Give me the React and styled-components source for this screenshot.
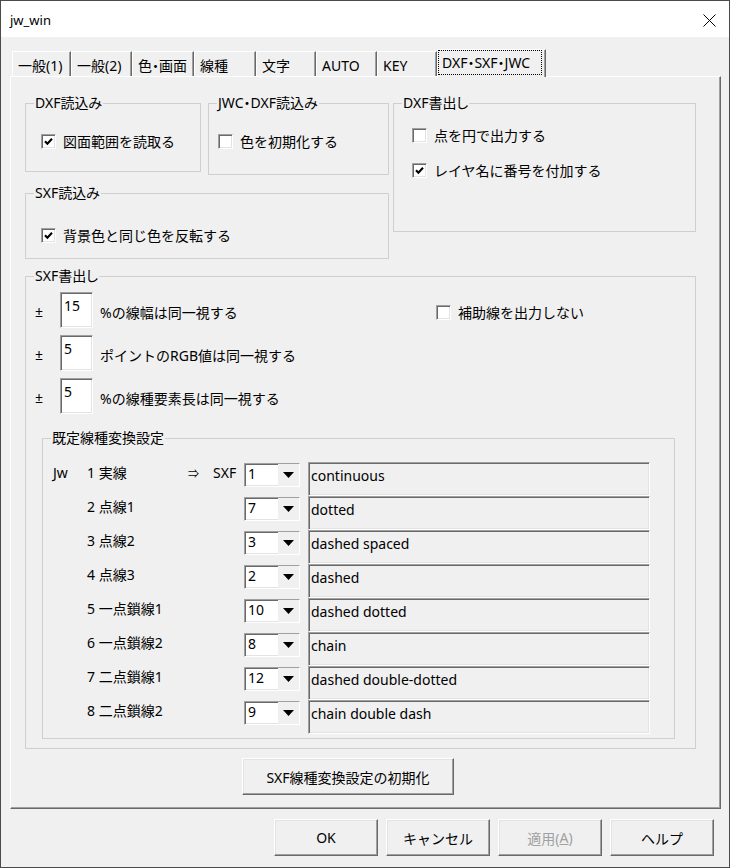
import styled, { createGlobalStyle } from "styled-components";

const GlobalStyle = createGlobalStyle`
  html, body {
    margin: 0;
    padding: 0;
    background: #f0f0f0;
  }
  body {
    font-family: "Noto Sans", "Noto Sans CJK JP", sans-serif;
    font-size: 14px;
    color: #000;
  }
  * {
    box-sizing: border-box;
  }
`;

const tabs = [
  { label: "一般(1)", w: 59 },
  { label: "一般(2)", w: 61 },
  { label: "色・画面", w: 62 },
  { label: "線種", w: 62 },
  { label: "文字", w: 60 },
  { label: "AUTO", w: 61 },
  { label: "KEY", w: 60 },
  { label: "DXF・SXF・JWC", w: 109, active: true },
];

const tolerances = [
  { value: "15", text: "%の線幅は同一視する" },
  { value: "5", text: "ポイントのRGB値は同一視する" },
  { value: "5", text: "%の線種要素長は同一視する" },
];

const lineTypes = [
  { name: "1 実線", sxf: "1", desc: "continuous" },
  { name: "2 点線1", sxf: "7", desc: "dotted" },
  { name: "3 点線2", sxf: "3", desc: "dashed spaced" },
  { name: "4 点線3", sxf: "2", desc: "dashed" },
  { name: "5 一点鎖線1", sxf: "10", desc: "dashed dotted" },
  { name: "6 一点鎖線2", sxf: "8", desc: "chain" },
  { name: "7 二点鎖線1", sxf: "12", desc: "dashed double-dotted" },
  { name: "8 二点鎖線2", sxf: "9", desc: "chain double dash" },
];

function Check({ checked = false, children, ml = 0, mt = 0 }) {
  return (
    <CheckRow $ml={ml} $mt={mt}>
      <CheckBox>
        {checked && (
          <svg width="9" height="9" viewBox="0 0 9 9">
            <polyline
              points="1,4.2 3.4,6.8 8,1.8"
              fill="none"
              stroke="#000"
              strokeWidth="2.1"
            />
          </svg>
        )}
      </CheckBox>
      <span>{children}</span>
    </CheckRow>
  );
}

function Combo({ value }) {
  return (
    <ComboBox>
      <ComboValue>{value}</ComboValue>
      <ComboButton>
        <svg width="11" height="6" viewBox="0 0 11 6">
          <polygon points="0,0 11,0 5.5,6" fill="#000" />
        </svg>
      </ComboButton>
    </ComboBox>
  );
}

export default function App() {
  return (
    <>
      <GlobalStyle />
      <Window>
        <TitleBar>
          <Title>jw_win</Title>
          <svg width="13" height="13" viewBox="0 0 13 13">
            <path d="M0.5 0.5 L12.5 12.5 M12.5 0.5 L0.5 12.5" stroke="#000" strokeWidth="1" />
          </svg>
        </TitleBar>

        <Body>
          <TabStrip>
            {tabs.map((t) => (
              <Tab key={t.label} $w={t.w} $active={t.active}>
                {t.active ? <FocusRing>{t.label}</FocusRing> : t.label}
              </Tab>
            ))}
          </TabStrip>

          <Panel>
            <TopArea>
              <LeftColumn>
                <ReadRow>
                  <GroupBox $w={176} $h={69}>
                    <Legend>DXF読込み</Legend>
                    <Check checked ml={15} mt={19}>図面範囲を読取る</Check>
                  </GroupBox>
                  <GroupBox $w={181} $h={72}>
                    <Legend>JWC・DXF読込み</Legend>
                    <Check ml={9} mt={19}>色を初期化する</Check>
                  </GroupBox>
                </ReadRow>
                <GroupBox $w={364} $h={66} $m="18px 0 0 0">
                  <Legend>SXF読込み</Legend>
                  <Check checked ml={15} mt={23}>背景色と同じ色を反転する</Check>
                </GroupBox>
              </LeftColumn>
              <GroupBox $w={303} $h={129} $m="0 0 0 4px">
                <Legend>DXF書出し</Legend>
                <Check ml={18} mt={13}>点を円で出力する</Check>
                <Check checked ml={18} mt={15}>レイヤ名に番号を付加する</Check>
              </GroupBox>
            </TopArea>

            <GroupBox $w={671} $h={473} $m="17px 0 0 0">
              <Legend>SXF書出し</Legend>
              <ToleranceArea>
                <ToleranceList>
                  {tolerances.map((t) => (
                    <ToleranceRow key={t.text}>
                      <PlusMinus>±</PlusMinus>
                      <NumberBox>{t.value}</NumberBox>
                      <RowText>{t.text}</RowText>
                    </ToleranceRow>
                  ))}
                </ToleranceList>
                <Check mt={10}>補助線を出力しない</Check>
              </ToleranceArea>

              <GroupBox $w={633} $h={301} $m="24px 0 0 16px">
                <Legend>既定線種変換設定</Legend>
                <LineGrid>
                  {lineTypes.map((l, i) => (
                    <LineRow key={l.name}>
                      <GridText>{i === 0 ? "Jw" : ""}</GridText>
                      <GridText>{l.name}</GridText>
                      <ArrowText>{i === 0 ? "⇒" : ""}</ArrowText>
                      <GridText>{i === 0 ? "SXF" : ""}</GridText>
                      <Combo value={l.sxf} />
                      <StaticBox>{l.desc}</StaticBox>
                    </LineRow>
                  ))}
                </LineGrid>
              </GroupBox>
            </GroupBox>

            <PushButton $w={212} $m="9px 0 0 217px">
              SXF線種変換設定の初期化
            </PushButton>
          </Panel>

          <Footer>
            <PushButton $w={104}>OK</PushButton>
            <PushButton $w={104}>キャンセル</PushButton>
            <PushButton $w={104} $disabled>
              適用(<u>A</u>)
            </PushButton>
            <PushButton $w={104}>ヘルプ</PushButton>
          </Footer>
        </Body>
      </Window>
    </>
  );
}

const Window = styled.div`
  width: 730px;
  height: 868px;
  border: 1px solid #4a4a4a;
  background: #f0f0f0;
  display: flex;
  flex-direction: column;
`;

const TitleBar = styled.div`
  height: 36px;
  flex: none;
  background: #fff;
  display: flex;
  align-items: center;
  justify-content: space-between;
  padding: 2px 13px 0 9px;
`;

const Title = styled.span`
  font-size: 13px;
  line-height: 18px;
`;

const Body = styled.div`
  flex: 1;
  display: flex;
  flex-direction: column;
  padding: 12px 8px 0 9px;
`;

const TabStrip = styled.div`
  height: 27px;
  display: flex;
  align-items: flex-end;
  padding-left: 2px;
  position: relative;
  z-index: 1;
`;

const Tab = styled.div`
  width: ${(p) => p.$w}px;
  height: ${(p) => (p.$active ? 28 : 25)}px;
  margin-bottom: ${(p) => (p.$active ? -1 : 0)}px;
  padding: ${(p) => (p.$active ? "0" : "3px 0 0 5px")};
  background: #f0f0f0;
  border-top: 1px solid #fff;
  border-left: 1px solid #fff;
  border-right: 1px solid #696969;
  box-shadow: inset -1px 0 #a0a0a0;
  display: flex;
  align-items: ${(p) => (p.$active ? "flex-start" : "center")};
  white-space: nowrap;
  overflow: hidden;
  line-height: 18px;
  font-feature-settings: "palt";
`;

const FocusRing = styled.div`
  width: 104px;
  height: 25px;
  border: 1px dotted #000;
  padding: 3px 0 0 3px;
  line-height: 18px;
`;

const Panel = styled.div`
  height: 733px;
  flex: none;
  border-top: 1px solid #fff;
  border-left: 1px solid #fff;
  border-right: 1px solid #696969;
  border-bottom: 1px solid #696969;
  box-shadow: inset -1px -1px #a0a0a0;
  padding: 26px 0 0 14px;
`;

const TopArea = styled.div`
  display: flex;
  align-items: flex-start;
`;

const LeftColumn = styled.div`
  width: 364px;
  display: flex;
  flex-direction: column;
`;

const ReadRow = styled.div`
  display: flex;
  align-items: flex-start;
  gap: 7px;
`;

const GroupBox = styled.div`
  flex: none;
  width: ${(p) => p.$w}px;
  height: ${(p) => p.$h}px;
  margin: ${(p) => p.$m || 0};
  border: 1px solid #cfcfcf;
`;

const Legend = styled.div`
  width: fit-content;
  height: 18px;
  line-height: 18px;
  margin: -10px 0 0 8px;
  padding: 0 1px;
  background: #f0f0f0;
  white-space: nowrap;
  font-feature-settings: "palt";
`;

const CheckRow = styled.div`
  height: 20px;
  display: flex;
  align-items: center;
  gap: 7px;
  margin: ${(p) => p.$mt}px 0 0 ${(p) => p.$ml}px;
  white-space: nowrap;
`;

const sunken = `
  background: #fff;
  border: 1px solid;
  border-color: #a0a0a0 #fff #fff #a0a0a0;
  box-shadow: inset 1px 1px #696969, inset -1px -1px #e3e3e3;
`;

const CheckBox = styled.span`
  ${sunken}
  width: 15px;
  height: 15px;
  flex: none;
  display: flex;
  align-items: center;
  justify-content: center;
`;

const ToleranceArea = styled.div`
  display: flex;
  align-items: flex-start;
  margin: 7px 0 0 9px;
`;

const ToleranceList = styled.div`
  width: 401px;
  display: flex;
  flex-direction: column;
  gap: 7px;
`;

const ToleranceRow = styled.div`
  height: 36px;
  display: flex;
  align-items: center;
`;

const PlusMinus = styled.span`
  width: 25px;
  padding-top: 3px;
`;

const NumberBox = styled.div`
  ${sunken}
  width: 33px;
  height: 36px;
  padding: 4px 0 0 3px;
  line-height: 18px;
`;

const RowText = styled.span`
  margin-left: 7px;
  padding-top: 4px;
  white-space: nowrap;
`;

const LineGrid = styled.div`
  margin: 15px 0 0 10px;
  display: flex;
  flex-direction: column;
`;

const LineRow = styled.div`
  height: 34px;
  display: grid;
  grid-template-columns: 34px 101px 25px 31px 56px 342px;
  align-items: start;
`;

const GridText = styled.span`
  padding-top: 2px;
  line-height: 18px;
  white-space: nowrap;
`;

const ArrowText = styled.span`
  padding-top: 2px;
  line-height: 18px;
  font-family: "Noto Sans CJK JP", sans-serif;
  font-size: 11px;
`;

const ComboBox = styled.div`
  ${sunken}
  margin-top: 1px;
  width: 56px;
  height: 24px;
  display: flex;
`;

const ComboValue = styled.span`
  flex: 1;
  padding: 1px 0 0 3px;
  line-height: 18px;
`;

const ComboButton = styled.span`
  width: 21px;
  background: #f0f0f0;
  display: flex;
  align-items: center;
  justify-content: center;
  padding-bottom: 1px;
`;

const StaticBox = styled.div`
  width: 342px;
  height: 34px;
  margin-left: 8px;
  border: 1px solid;
  border-color: #a0a0a0 #fff #fff #a0a0a0;
  box-shadow: inset 1px 1px #696969, inset -1px -1px #e3e3e3;
  padding: 4px 0 0 2px;
  line-height: 18px;
  white-space: nowrap;
`;

const PushButton = styled.div`
  width: ${(p) => p.$w}px;
  height: 37px;
  margin: ${(p) => p.$m || 0};
  flex: none;
  background: #f0f0f0;
  border: 1px solid;
  border-color: #fff #696969 #696969 #fff;
  box-shadow: inset -1px -1px #a0a0a0, inset 1px 1px #e3e3e3;
  display: flex;
  align-items: center;
  justify-content: center;
  color: ${(p) => (p.$disabled ? "#a0a0a0" : "#000")};
  white-space: nowrap;
`;

const Footer = styled.div`
  margin-top: 10px;
  display: flex;
  justify-content: flex-end;
  gap: 8px;
  padding-right: 7px;
`;
